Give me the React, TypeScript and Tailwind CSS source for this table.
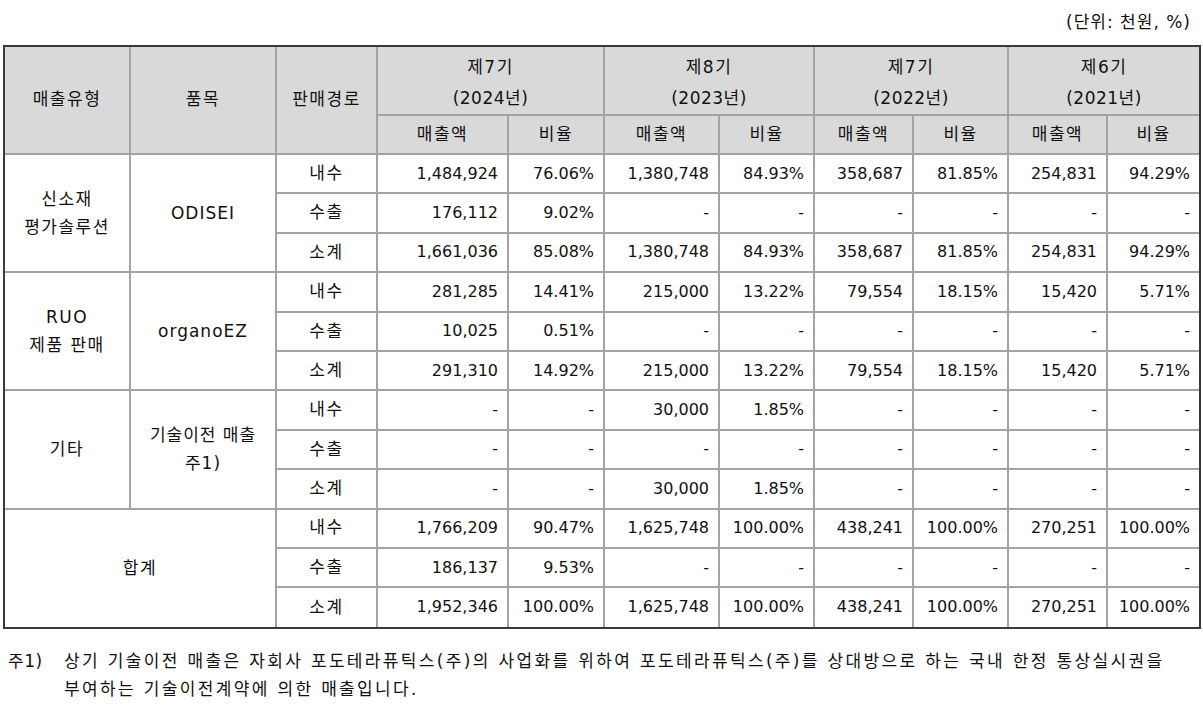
import React from "react";

type Group = {
  type: string[];
  item: string[] | null;
  rows: [string, string[]][];
};

const periods: [string, string][] = [
  ["제7기", "(2024년)"],
  ["제8기", "(2023년)"],
  ["제7기", "(2022년)"],
  ["제6기", "(2021년)"],
];

const dash = ["-", "-", "-", "-", "-", "-", "-", "-"];

const groups: Group[] = [
  {
    type: ["신소재", "평가솔루션"],
    item: ["ODISEI"],
    rows: [
      ["내수", ["1,484,924", "76.06%", "1,380,748", "84.93%", "358,687", "81.85%", "254,831", "94.29%"]],
      ["수출", ["176,112", "9.02%", "-", "-", "-", "-", "-", "-"]],
      ["소계", ["1,661,036", "85.08%", "1,380,748", "84.93%", "358,687", "81.85%", "254,831", "94.29%"]],
    ],
  },
  {
    type: ["RUO", "제품 판매"],
    item: ["organoEZ"],
    rows: [
      ["내수", ["281,285", "14.41%", "215,000", "13.22%", "79,554", "18.15%", "15,420", "5.71%"]],
      ["수출", ["10,025", "0.51%", "-", "-", "-", "-", "-", "-"]],
      ["소계", ["291,310", "14.92%", "215,000", "13.22%", "79,554", "18.15%", "15,420", "5.71%"]],
    ],
  },
  {
    type: ["기타"],
    item: ["기술이전 매출", "주1)"],
    rows: [
      ["내수", ["-", "-", "30,000", "1.85%", "-", "-", "-", "-"]],
      ["수출", dash],
      ["소계", ["-", "-", "30,000", "1.85%", "-", "-", "-", "-"]],
    ],
  },
  {
    type: ["합계"],
    item: null,
    rows: [
      ["내수", ["1,766,209", "90.47%", "1,625,748", "100.00%", "438,241", "100.00%", "270,251", "100.00%"]],
      ["수출", ["186,137", "9.53%", "-", "-", "-", "-", "-", "-"]],
      ["소계", ["1,952,346", "100.00%", "1,625,748", "100.00%", "438,241", "100.00%", "270,251", "100.00%"]],
    ],
  },
];

const cell = "border-2 border-[#a3a3a3] p-0";
const head = `${cell} bg-[#d9d9d9] text-center align-middle text-[17px] tracking-[1.5px] font-normal`;

function Lines({ lines }: { lines: string[] }) {
  return (
    <>
      {lines.map((l, i) => (
        <div key={i}>{l}</div>
      ))}
    </>
  );
}

export default function App() {
  return (
    <div
      className="w-[1203px] h-[705px] bg-white text-[#111] text-[16px] overflow-hidden"
      style={{ fontFamily: '"DejaVu Sans", "Noto Sans CJK KR", sans-serif' }}
    >
      <div className="h-[45px] flex items-center justify-end pr-[12px] text-[17px] tracking-[1px]">(단위: 천원, %)</div>

      <div className="ml-[3px] w-[1198px] border-2 border-[#3a3a3a]">
        <table className="w-[1194px] table-fixed border-collapse border-hidden">
          <colgroup>
            <col className="w-[125px]" />
            <col className="w-[146px]" />
            <col className="w-[101px]" />
            <col className="w-[131px]" />
            <col className="w-[96px]" />
            <col className="w-[115px]" />
            <col className="w-[95px]" />
            <col className="w-[99px]" />
            <col className="w-[95px]" />
            <col className="w-[99px]" />
            <col className="w-[92px]" />
          </colgroup>
          <thead>
            <tr className="h-[68px]">
              <th rowSpan={2} className={head}>매출유형</th>
              <th rowSpan={2} className={head}>품목</th>
              <th rowSpan={2} className={head}>판매경로</th>
              {periods.map(([p, y], i) => (
                <th key={i} colSpan={2} className={`${head} leading-[31px] pt-[4px]`}>
                  <div>{p}</div>
                  <div className="tracking-[0.5px]">{y}</div>
                </th>
              ))}
            </tr>
            <tr className="h-[39px]">
              {periods.map((_, i) => (
                <React.Fragment key={i}>
                  <th className={head}>매출액</th>
                  <th className={head}>비율</th>
                </React.Fragment>
              ))}
            </tr>
          </thead>
          <tbody>
            {groups.map((g, gi) =>
              g.rows.map(([route, vals], ri) => (
                <tr key={`${gi}-${ri}`} className="h-[39.4px]">
                  {ri === 0 && (
                    <td
                      rowSpan={3}
                      colSpan={g.item ? 1 : 2}
                      className={`${cell} text-center align-middle leading-[28px] text-[17px] tracking-[1.5px]`}
                    >
                      <Lines lines={g.type} />
                    </td>
                  )}
                  {ri === 0 && g.item && (
                    <td rowSpan={3} className={`${cell} text-center align-middle leading-[28px] text-[17px] tracking-[1px]`}>
                      <Lines lines={g.item} />
                    </td>
                  )}
                  <td className={`${cell} text-center align-middle text-[17px] tracking-[1.5px]`}>{route}</td>
                  {vals.map((v, vi) => (
                    <td key={vi} className={`${cell} text-right align-middle pr-[9px]`}>
                      {v}
                    </td>
                  ))}
                </tr>
              ))
            )}
          </tbody>
        </table>
      </div>

      <div className="mt-[18px] pl-[8px] leading-[28px] text-[17px] tracking-[2.35px] flex">
        <div className="w-[56px] shrink-0 tracking-[0.5px]">주1)</div>
        <div className="w-[1138px]">
          상기 기술이전 매출은 자회사 포도테라퓨틱스(주)의 사업화를 위하여 포도테라퓨틱스(주)를 상대방으로 하는 국내 한정 통상실시권을
          <br />
          부여하는 기술이전계약에 의한 매출입니다.
        </div>
      </div>
    </div>
  );
}
